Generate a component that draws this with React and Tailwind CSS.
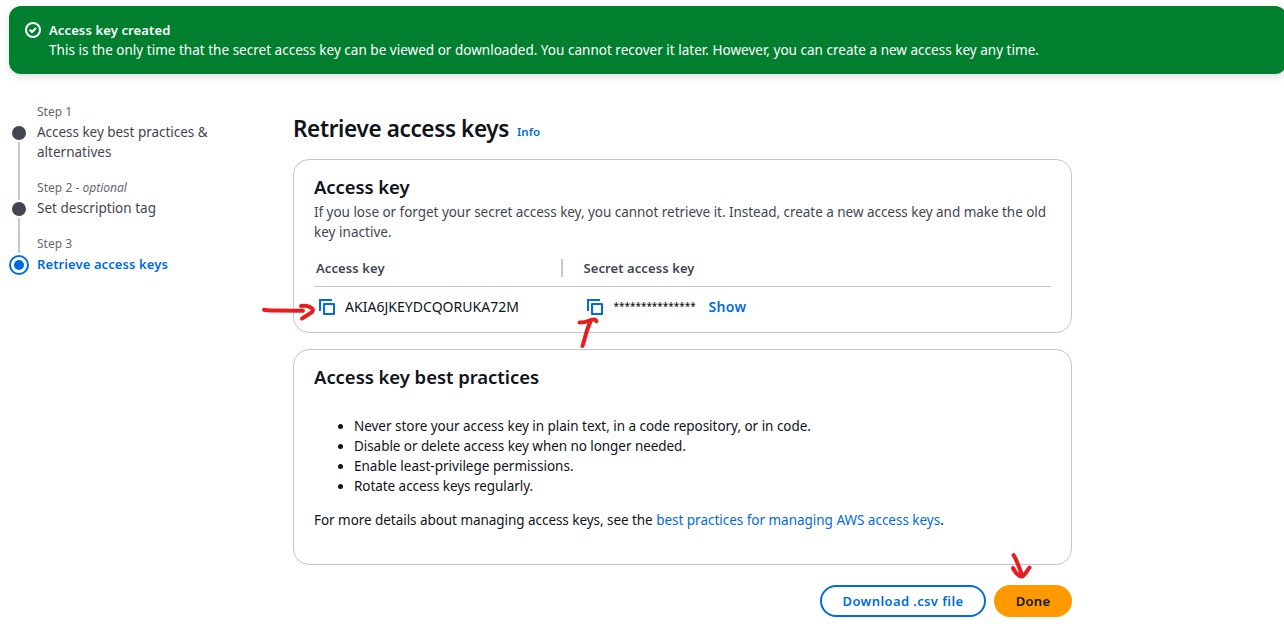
function CopyIcon() {
  return (
    <svg viewBox="0 0 16 16" className="size-4 shrink-0 text-[#006ce0]" fill="none" stroke="currentColor" strokeWidth="2">
      <path d="M13 1H1v11" />
      <path d="M5 5h10v10H5z" strokeLinejoin="round" />
    </svg>
  );
}

function SuccessIcon() {
  return (
    <svg viewBox="0 0 16 16" className="mt-[2px] size-4 shrink-0" fill="none" stroke="currentColor" strokeWidth="2">
      <circle cx="8" cy="8" r="7" />
      <path d="m4.700 7.700 2.300 2.300 4-4" />
    </svg>
  );
}

function Banner() {
  return (
    <section className="ml-[9px] mt-[6px] flex h-[68px] w-[1278px] shrink-0 gap-2 rounded-xl bg-[#00802f] px-4 pt-[14px] text-white shadow-[0_3px_8px_rgba(0,7,22,0.13)]">
      <SuccessIcon />
      <div>
        <h2 className="text-[13px] font-semibold tracking-[0.12px]">Access key created</h2>
        <p className="tracking-[0.017px]">
          This is the only time that the secret access key can be viewed or downloaded. You cannot recover it later. However, you can create a new access key any time.
        </p>
      </div>
    </section>
  );
}

function Steps() {
  return (
    <nav className="flex w-[293px] shrink-0 gap-2 pl-[9px] pt-7">
      <div className="flex w-5 flex-col items-center gap-[2px] pt-6">
        <span className="size-[14px] rounded-full bg-[#424650]" />
        <span className="h-[58px] w-[2px] bg-[#c6c6cd]" />
        <span className="size-[14px] rounded-full bg-[#424650]" />
        <span className="h-[35px] w-[2px] bg-[#c6c6cd]" />
        <span className="flex size-5 items-center justify-center rounded-full border-2 border-[#006ce0]">
          <span className="size-[10px] rounded-full bg-[#006ce0]" />
        </span>
      </div>
      <ol className="flex flex-col gap-4 text-[#424650]">
        <li>
          <p className="text-xs leading-5 text-[#656871]">Step 1</p>
          <p className="tracking-[-0.03px]">
            Access key best practices &amp;
            <br />
            <span className="tracking-[0.01px]">alternatives</span>
          </p>
        </li>
        <li>
          <p className="text-xs leading-5 text-[#656871]">
            <span className="tracking-[0.05px]">Step 2 - </span>
            <em className="tracking-[-0.02px]">optional</em>
          </p>
          <p className="tracking-[0.01px]">Set description tag</p>
        </li>
        <li>
          <p className="text-xs leading-5 text-[#656871]">Step 3</p>
          <p className="text-[13px] font-semibold leading-5 tracking-[0.1px] text-[#006ce0]">Retrieve access keys</p>
        </li>
      </ol>
    </nav>
  );
}

function AccessKeyCard() {
  return (
    <section className="mt-[15px] h-[174px] rounded-2xl border border-[#c6c6cd] px-5 pt-[15px]">
      <h2 className="text-[18.5px] font-semibold leading-6 tracking-[-0.09px]">Access key</h2>
      <p className="mt-[3px] whitespace-nowrap tracking-[-0.036px] text-[#424650]">
        If you lose or forget your secret access key, you cannot retrieve it. Instead, create a new access key and make the old
        <br />
        <span className="tracking-[0.02px]">key inactive.</span>
      </p>
      <div className="mt-4 flex h-[29px] items-start border-b border-[#c6c6cd] text-[13px] font-semibold tracking-[0.09px] text-[#424650]">
        <div className="flex w-[249px] items-center justify-between pl-[2px]">
          <span>Access key</span>
          <span className="h-[18px] w-[2px] bg-[#c6c6cd]" />
        </div>
        <span className="pl-[20.5px]">Secret access key</span>
      </div>
      <div className="flex h-10 items-center">
        <div className="flex w-[273px] items-center gap-[10px] pl-[5px]">
          <CopyIcon />
          <span className="text-sm leading-5 tracking-[0.03px]">AKIA6JKEYDCQORUKA72M</span>
        </div>
        <CopyIcon />
        <span className="ml-[10.5px] w-[95px] pb-[3px] text-[10px] font-medium leading-5">***************</span>
        <span className="text-sm font-semibold leading-5 tracking-[0.35px] text-[#006ce0]">Show</span>
      </div>
    </section>
  );
}

function BestPracticesCard() {
  return (
    <section className="mt-4 h-[216px] rounded-2xl border border-[#c6c6cd] px-5 pt-[15px]">
      <h2 className="text-[18.5px] font-semibold leading-6 tracking-[-0.05px]">Access key best practices</h2>
      <ul className="mt-[27px] list-disc whitespace-nowrap pl-10">
        <li className="tracking-[-0.03px]">Never store your access key in plain text, in a code repository, or in code.</li>
        <li className="tracking-[-0.06px]">Disable or delete access key when no longer needed.</li>
        <li>Enable least-privilege permissions.</li>
        <li className="tracking-[-0.057px]">Rotate access keys regularly.</li>
      </ul>
      <p className="mt-[14px] tracking-[-0.05px]">
        For more details about managing access keys, see the{" "}
        <a className="tracking-[-0.02px] text-[#006ce0]">best practices for managing AWS access keys</a>.
      </p>
    </section>
  );
}

function Annotations() {
  return (
    <svg viewBox="0 0 1284 637" className="pointer-events-none absolute inset-0 h-[637px] w-[1284px]" fill="none" stroke="#e71d1f" strokeWidth="4" strokeLinecap="round" strokeLinejoin="round">
      <path d="M264 309.800q3 .8 8 .7l31 .3M301 306c6-1 11.500 1 12 4.200-.5 3-6.500 5-11 8.300" />
      <path d="M579.500 322.500c6 0 7-.8 11-2.300 3-1 5.500-1 6 1M590.500 321.500c-3.500 7-4.500 13-8 24.500" />
      <path d="M1013.500 555c3 4 5.500 12 8.500 20M1013 568c2 4 5.500 8 9 8.500 3-1 5-6 7.500-9" />
    </svg>
  );
}

export default function App() {
  return (
    <main className="relative flex h-[637px] w-full flex-col overflow-hidden bg-white font-['Noto_Sans',sans-serif] text-[13.5px] leading-5 text-[#0f141a]">
      <Banner />
      <div className="flex">
        <Steps />
        <div className="w-[779px] shrink-0 pt-10">
          <header className="flex h-[30px] items-center gap-2">
            <h1 className="-mt-px text-[22.5px] font-semibold leading-[30px] tracking-[-0.36px]">Retrieve access keys</h1>
            <a className="mt-[5px] text-[11.5px] font-semibold text-[#006ce0]">Info</a>
          </header>
          <AccessKeyCard />
          <BestPracticesCard />
          <div className="mt-5 flex justify-end gap-2 text-[13px] font-semibold">
            <button className="h-8 w-[166px] rounded-full border-2 border-[#006ce0] tracking-[0.39px] text-[#006ce0]">Download .csv file</button>
            <button className="h-8 w-[78px] rounded-full bg-[#ff9900] tracking-[0.27px]">Done</button>
          </div>
        </div>
      </div>
      <Annotations />
    </main>
  );
}
